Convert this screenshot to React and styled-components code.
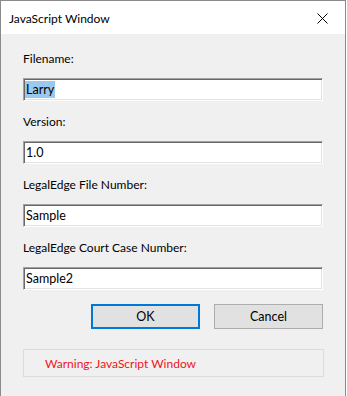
import React from "react";
import styled, { createGlobalStyle } from "styled-components";

const FONT = `Lato, "Noto Sans", sans-serif`;

const Global = createGlobalStyle`
  html, body { margin: 0; padding: 0; background: #ffffff; }
  body { font-family: ${FONT}; font-size: 12px; }
`;

const Window = styled.div`
  width: 346px;
  height: 396px;
  box-sizing: border-box;
  border: 1px solid #8a8a8a;
  border-bottom: none;
  display: flex;
  flex-direction: column;
  background: #f0f0f0;
`;

const TitleBar = styled.div`
  height: 33px;
  background: #ffffff;
  display: flex;
  align-items: center;
  justify-content: space-between;
  padding: 0 8px 0 8px;
  flex-shrink: 0;
`;

const Title = styled.span`
  font-size: 12px;
  color: #000;
  line-height: 16px;
  padding-top: 2px;
`;

const CloseIcon = styled.svg`
  width: 11px;
  height: 11px;
  margin-right: 9px;
  margin-top: 2px;
`;

const Body = styled.div`
  flex: 1;
  padding: 17px 22px 0 22px;
  display: flex;
  flex-direction: column;
`;

const Field = styled.div`
  display: flex;
  flex-direction: column;
  gap: 11px;
  margin-bottom: 13px;
`;

const Label = styled.label`
  font-size: 12px;
  line-height: 16px;
  color: #000;
`;

const TextBox = styled.div`
  height: 23px;
  box-sizing: border-box;
  background: #ffffff;
  border: 1px solid;
  border-color: #a0a0a0 #ffffff #ffffff #a0a0a0;
  box-shadow: inset 1px 1px 0 #696969, inset -1px -1px 0 #e3e3e3;
  padding: 0 2px;
  display: flex;
  align-items: center;
  font-size: 12.5px;
  color: #000;
  white-space: nowrap;
`;

const Selected = styled.span`
  background: #99c9ef;
  line-height: 17px;
  padding: 0 1px;
  margin-left: -1px;
`;

const ButtonRow = styled.div`
  display: flex;
  justify-content: flex-end;
  gap: 14px;
  margin-top: 1px;
`;

const Button = styled.button`
  width: 109px;
  height: 25px;
  box-sizing: border-box;
  background: #e1e1e1;
  border: ${(p) => (p.$default ? "2px solid #0078d7" : "1px solid #adadad")};
  font-family: ${FONT};
  font-size: 12.5px;
  color: #000;
  padding: 0;
  margin: 0;
`;

const WarningBox = styled.div`
  margin-top: 20px;
  width: 301px;
  height: 28px;
  box-sizing: border-box;
  border: 1px solid #dcdcdc;
  display: flex;
  align-items: center;
  padding-left: 21px;
  color: #f0141e;
  font-size: 12px;
`;

const fields = [
  { label: "Filename:", value: "Larry", selected: true },
  { label: "Version:", value: "1.0" },
  { label: "LegalEdge File Number:", value: "Sample" },
  { label: "LegalEdge Court Case Number:", value: "Sample2" },
];

export default function App() {
  return (
    <>
      <Global />
      <Window>
        <TitleBar>
          <Title>JavaScript Window</Title>
          <CloseIcon viewBox="0 0 11 11">
            <path d="M0.5 0.5 L10.5 10.5 M10.5 0.5 L0.5 10.5" stroke="#000" strokeWidth="1" fill="none" />
          </CloseIcon>
        </TitleBar>
        <Body>
          {fields.map((f) => (
            <Field key={f.label}>
              <Label>{f.label}</Label>
              <TextBox>{f.selected ? <Selected>{f.value}</Selected> : f.value}</TextBox>
            </Field>
          ))}
          <ButtonRow>
            <Button $default>OK</Button>
            <Button>Cancel</Button>
          </ButtonRow>
          <WarningBox>Warning: JavaScript Window</WarningBox>
        </Body>
      </Window>
    </>
  );
}
